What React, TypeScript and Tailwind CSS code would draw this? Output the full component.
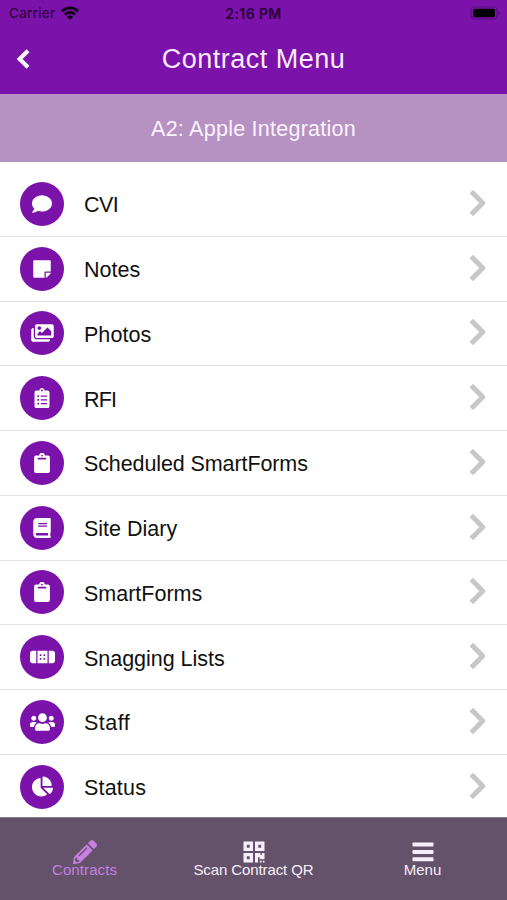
import React from 'react'
import {
  FaBandAid,
  FaBook,
  FaChartPie,
  FaClipboardList,
  FaComment,
  FaImages,
  FaPencilAlt,
  FaStickyNote,
  FaUsers,
} from 'react-icons/fa'

function ClipboardIcon() {
  return (
    <svg width="16" height="20" viewBox="0 0 16 20">
      <path
        fill="currentColor"
        fillRule="evenodd"
        d="M2 2.6h3.2a2.8 2.8 0 0 1 5.6 0H14a1.9 1.9 0 0 1 1.9 1.9v13.6A1.9 1.9 0 0 1 14 20H2a1.9 1.9 0 0 1-1.9-1.9V4.5A1.9 1.9 0 0 1 2 2.6ZM8 1.7a.9.9 0 1 0 0 1.8.9.9 0 0 0 0-1.8ZM4.5 4.7a.9.9 0 0 0 0 1.8h7a.9.9 0 0 0 0-1.8Z"
      />
    </svg>
  )
}

function QrIcon() {
  return (
    <svg width="22" height="22" viewBox="0 0 22 22" fill="currentColor">
      <path fillRule="evenodd" d="M.5.5H10V10H.5ZM3.8 3.8V6.7H6.7V3.8Z" />
      <path fillRule="evenodd" d="M12 .5H21.5V10H12ZM15.3 3.8V6.7H18.2V3.8Z" />
      <path fillRule="evenodd" d="M.5 12H10V21.5H.5ZM3.8 15.3V18.2H6.7V15.3Z" />
      <path d="M12 12h5.5v2h1.3v-2h2.7v6.3h-4.8v-2h-1.7v5.2h-3ZM16.8 19.7h1.8v1.8h-1.8ZM19.8 19.7h1.7v1.8h-1.7Z" />
    </svg>
  )
}

function BarsIcon() {
  return (
    <svg width="22" height="22" viewBox="0 0 22 22" fill="currentColor">
      <rect x=".5" y="1.5" width="21" height="4" rx=".8" />
      <rect x=".5" y="8.9" width="21" height="4" rx=".8" />
      <rect x=".5" y="16.2" width="21" height="4" rx=".8" />
    </svg>
  )
}

const items = [
  { label: 'CVI', icon: <FaComment size={20} />, spacing: 'tracking-[-0.6px]' },
  { label: 'Notes', icon: <FaStickyNote size={20} />, spacing: 'tracking-[0.05px]' },
  { label: 'Photos', icon: <FaImages size={20} className="w-[23px]" />, spacing: 'tracking-[0.05px]' },
  { label: 'RFI', icon: <FaClipboardList size={20} />, spacing: 'tracking-[-0.8px]' },
  { label: 'Scheduled SmartForms', icon: <ClipboardIcon />, spacing: 'tracking-[-0.1px]' },
  { label: 'Site Diary', icon: <FaBook size={20} />, spacing: 'tracking-[0px]' },
  { label: 'SmartForms', icon: <ClipboardIcon />, spacing: 'tracking-[0px]' },
  { label: 'Snagging Lists', icon: <FaBandAid size={20} className="w-[25px]" />, spacing: 'tracking-[-0.03px]' },
  { label: 'Staff', icon: <FaUsers size={20} className="w-[25px]" />, spacing: 'tracking-[0.5px]' },
  { label: 'Status', icon: <FaChartPie size={21} />, spacing: 'tracking-[0.2px]' },
]

const tabs = [
  { label: 'Contracts', icon: <FaPencilAlt size={24} />, color: 'text-[#c77fe0]', spacing: 'tracking-[0.1px]' },
  { label: 'Scan Contract QR', icon: <QrIcon />, color: 'text-[#f8eefb]', spacing: 'tracking-[-0.1px]' },
  { label: 'Menu', icon: <BarsIcon />, color: 'text-[#f8eefb]', spacing: 'tracking-[0px]' },
]

function StatusBar() {
  return (
    <div className="grid h-[26px] grid-cols-3 items-center px-[9px] pt-px font-['Inter','Liberation_Sans',sans-serif] text-[#260038]">
      <div className="flex items-center gap-[6px]">
        <span className="text-[13.5px] tracking-[0.3px]">Carrier</span>
        <svg className="-mt-[2px]" width="18" height="14" viewBox="0 0 18 14" fill="none" stroke="#0d0015" strokeWidth="2.8">
          <path d="M1 5.2a11.5 11.5 0 0 1 16 0" />
          <path d="M4 8.4a7.2 7.2 0 0 1 10 0" />
          <path d="M9 13.8 5.9 10.9a4.4 4.4 0 0 1 6.2 0Z" fill="#0d0015" stroke="none" />
        </svg>
      </div>
      <span className="text-center text-[14px] font-semibold tracking-[0.4px]">2:16 PM</span>
      <svg className="-mr-[3px] -mt-px justify-self-end" width="31" height="14" viewBox="0 0 31 14">
        <rect x="1" y="1" width="26" height="12" rx="3.5" fill="none" stroke="#5a0c82" strokeWidth="1.2" />
        <rect x="3" y="2.8" width="22" height="8.4" rx="2" fill="#000" />
        <path d="M28.5 5v4q1.6-.6 1.6-2t-1.6-2" fill="#5a0c82" />
      </svg>
    </div>
  )
}

export default function App() {
  return (
    <div className="flex h-[900px] w-[507px] flex-col overflow-hidden bg-white font-['Liberation_Sans',Arial,sans-serif]">
      <header className="h-[94px] shrink-0 bg-[#7b12a9]">
        <StatusBar />
        <div className="grid h-[66px] grid-cols-[60px_1fr_60px] items-center">
          <svg className="ml-[16px] text-white" width="14" height="20" viewBox="0 0 14 20" fill="none" stroke="currentColor" strokeWidth="4">
            <path d="M12 1.8 3.6 10 12 18.2" />
          </svg>
          <h1 className="text-center text-[27px] tracking-[0.5px] text-[#fbeaff]">Contract Menu</h1>
        </div>
      </header>

      <div className="flex h-[68px] shrink-0 items-center justify-center bg-[#b592c2] pt-[3px] text-[21.5px] tracking-[0.25px] text-[#fdf3ff]">
        A2: Apple Integration
      </div>

      <ul className="min-h-0 flex-1 overflow-hidden pt-[10.1px]">
        {items.map((item) => (
          <li key={item.label} className="flex h-[64.75px] items-center border-b-[1.5px] border-[#e2e2e4] pr-[21.5px] pl-[20.4px]">
            <span className="flex size-[44px] shrink-0 items-center justify-center rounded-full bg-[#7b12a9] text-white">
              {item.icon}
            </span>
            <span className={`ml-[19.6px] flex-1 pt-[3px] text-[21.5px] text-[#111] ${item.spacing}`}>
              {item.label}
            </span>
            <svg className="-mt-[2px] text-[#c7c7c8]" width="17" height="28" viewBox="0 0 17 28" fill="none" stroke="currentColor" strokeWidth="5" strokeLinejoin="round">
              <path d="M2.3 2.5 13.7 14 2.3 25.5" />
            </svg>
          </li>
        ))}
      </ul>

      <nav className="grid h-[83px] shrink-0 grid-cols-3 border-t border-[#8a7d90] bg-[#635269] pt-[22px] text-[15px]">
        {tabs.map((tab) => (
          <div key={tab.label} className={`flex flex-col items-center ${tab.color}`}>
            <span className="flex h-[24px] items-center">{tab.icon}</span>
            <span className={`-mt-[2px] leading-[16px] ${tab.spacing}`}>{tab.label}</span>
          </div>
        ))}
      </nav>
    </div>
  )
}
